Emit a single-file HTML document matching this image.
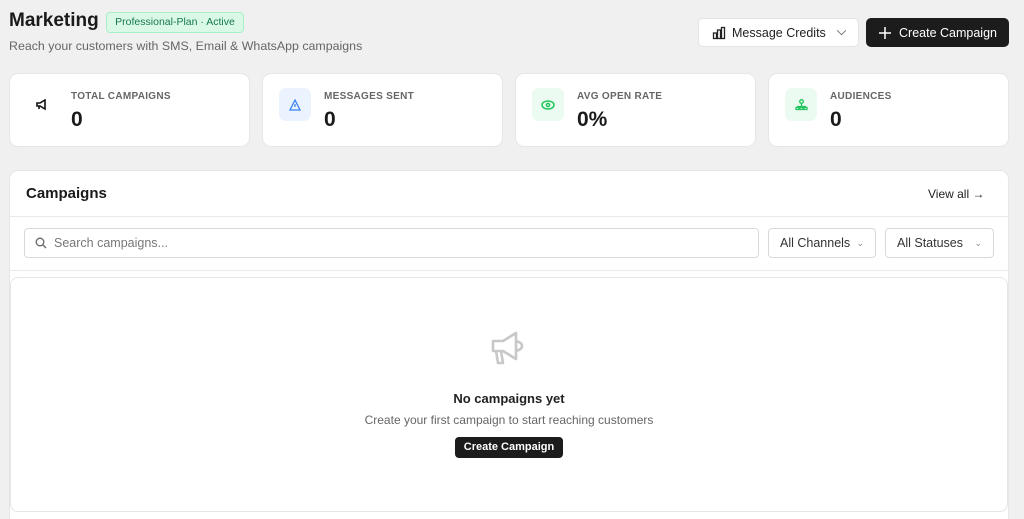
<!DOCTYPE html>
<html style="overflow:hidden"><head><style>
*{box-sizing:border-box;margin:0;padding:0}
html,body{width:1024px;height:519px;overflow:hidden}
body{background:#f0f0f0;font-family:"Liberation Sans",sans-serif;color:#1a1a1a;position:relative}
.abs{position:absolute}
h1{position:absolute;left:9px;top:10px;font-size:19px;font-weight:700}
.badge{position:absolute;left:106px;top:12px;width:138px;height:21px;background:#d9f9e6;border:1px solid #a7efc4;border-radius:4px;color:#16784a;font-size:10.5px;text-align:center;line-height:19px}
.sub{position:absolute;left:9px;top:39px;font-size:12.4px;color:#666}
.btn1{position:absolute;left:698px;top:18px;width:161px;height:29px;background:#fff;border:1px solid #e3e3e3;border-radius:5px;font-size:12.5px;display:flex;align-items:center;padding-left:13px;gap:6px;color:#222}
.btn2{position:absolute;left:866px;top:18px;width:143px;height:29px;background:#1c1c1c;border-radius:5px;color:#fff;font-size:12.5px;display:flex;align-items:center;padding-left:13px;gap:8px}
.card{position:absolute;top:73px;width:241px;height:74px;background:#fff;border-radius:9px;border:1px solid #e6e6e6}
.ic{position:absolute;left:16px;top:14px;width:32px;height:33px;border-radius:7px;display:flex;align-items:center;justify-content:center}
.lab{position:absolute;left:61px;top:17px;font-size:10px;font-weight:700;color:#666;letter-spacing:.3px}
.val{position:absolute;left:61px;top:34px;font-size:21px;font-weight:700;color:#1a1a1a}
.main{position:absolute;left:9px;top:170px;width:1000px;height:360px;background:#fff;border-radius:9px;border:1px solid #e6e6e6}
.sel{position:absolute;top:228px;height:30px;border:1px solid #d9d9d9;border-radius:4px;font-size:12.5px;color:#333;line-height:28px;padding-left:11px}
.sel span{position:absolute;right:11px;top:0;font-size:9px;color:#888}
</style></head><body>
<h1>Marketing</h1>
<div class="badge">Professional-Plan · Active</div>
<div class="sub">Reach your customers with SMS, Email &amp; WhatsApp campaigns</div>
<div class="btn1"><svg width="14" height="14" viewBox="0 0 14 14" fill="none" stroke="#222" stroke-width="1.3"><rect x="1.5" y="7" width="3" height="5.5"/><rect x="5.5" y="4" width="3" height="8.5"/><rect x="9.5" y="1.5" width="3" height="11"/></svg>Message Credits<svg style="margin-left:4px" width="11" height="7" viewBox="0 0 12 8" fill="none" stroke="#777" stroke-width="1.2"><path d="M1 1.5l5 5 5-5"/></svg></div>
<div class="btn2"><svg width="12" height="12" viewBox="0 0 12 12" stroke="#fff" stroke-width="1.5"><path d="M6 0v12M0 6h12"/></svg>Create Campaign</div>

<div class="card" style="left:9px"><div class="ic"><svg width="14" height="12" viewBox="0 0 14 12" fill="none" stroke="#111" stroke-width="1.6"><path d="M2 4h3l5-3v9L5 7H2zM4 7v3"/></svg></div><div class="lab">TOTAL CAMPAIGNS</div><div class="val">0</div></div>
<div class="card" style="left:262px"><div class="ic" style="background:#ebf3ff"><svg width="12" height="12" viewBox="0 0 12 12" fill="none" stroke="#3b82f6" stroke-width="1.3"><path d="M6 1L1 11h10zM6 5v3"/></svg></div><div class="lab">MESSAGES SENT</div><div class="val">0</div></div>
<div class="card" style="left:515px"><div class="ic" style="background:#ebfbf1"><svg width="14" height="10" viewBox="0 0 14 10" fill="none" stroke="#22c55e" stroke-width="1.5"><ellipse cx="7" cy="5" rx="6" ry="4"/><circle cx="7" cy="5" r="1.6"/></svg></div><div class="lab">AVG OPEN RATE</div><div class="val">0%</div></div>
<div class="card" style="left:768px"><div class="ic" style="background:#ebfbf1"><svg width="13" height="12" viewBox="0 0 13 12" fill="none" stroke="#22c55e" stroke-width="1.3"><circle cx="6.5" cy="2.5" r="1.8"/><path d="M6.5 4.5v3M2 7.5h9M1 10.5h3v-2H1zM5 10.5h3v-2H5zM9 10.5h3v-2H9z"/></svg></div><div class="lab">AUDIENCES</div><div class="val">0</div></div>

<div class="main">
<div class="abs" style="left:16px;top:14px;font-size:15px;font-weight:700">Campaigns</div>
<div class="abs" style="left:918px;top:16px;font-size:12px;color:#222">View all →</div>
<div class="abs" style="left:0;top:45px;width:998px;border-top:1px solid #eaeaea"></div>
<div class="abs" style="left:0;top:99px;width:998px;border-top:1px solid #eaeaea"></div>
<div class="abs" style="left:0;top:106px;width:998px;height:235px;border:1px solid #e6e6e6;border-radius:8px"></div>
<div class="abs" style="left:0;top:160px;width:998px;text-align:center">
<svg width="38" height="36" viewBox="0 0 38 36" fill="none" stroke="#c8c8c8" stroke-width="2.6" stroke-linejoin="round"><path d="M3 10h10l13-8v26l-13-8H3zM6 20l2 12h5l-2-12M26 10c4 1 6 3 6 5s-2 4-6 5"/></svg>
<div style="font-size:13px;font-weight:700;margin-top:19px;color:#222">No campaigns yet</div>
<div style="font-size:12px;color:#666;margin-top:7px">Create your first campaign to start reaching customers</div>
<div style="display:inline-block;margin-top:10px;background:#1c1c1c;color:#fff;font-size:11px;font-weight:700;border-radius:4px;padding:0 9px;height:21px;line-height:21px">Create Campaign</div>
</div>
</div>
<div class="sel" style="left:24px;width:735px;padding-left:29px;color:#777"><svg class="abs" style="left:10px;top:8px" width="12" height="12" viewBox="0 0 12 12" fill="none" stroke="#666" stroke-width="1.3"><circle cx="5" cy="5" r="3.8"/><path d="M8 8l3 3"/></svg>Search campaigns...</div>
<div class="sel" style="left:768px;width:108px">All Channels<span>⌄</span></div>
<div class="sel" style="left:885px;width:109px">All Statuses<span>⌄</span></div>
</body></html>
